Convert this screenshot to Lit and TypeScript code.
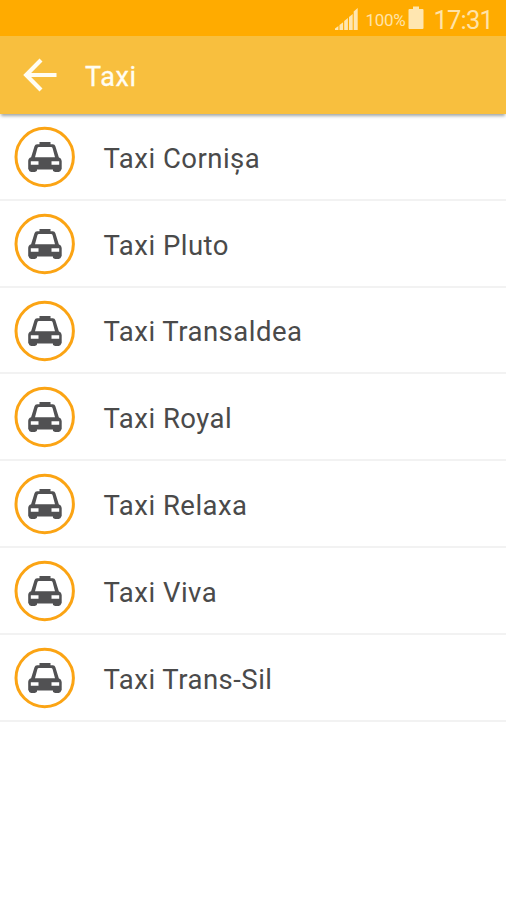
import { LitElement, html, css } from "lit";
import { customElement, property } from "lit/decorators.js";

@customElement("status-bar")
class StatusBar extends LitElement {
  static styles = css`
    :host {
      display: flex;
      height: 36px;
      box-sizing: border-box;
      padding-right: 13px;
      align-items: center;
      justify-content: flex-end;
      background: #ffab00;
      color: #ffe3a8;
    }
    svg { display: block; fill: #ffe6b0; }
    .signal { margin-right: 8px; }
    .percent { font-size: 17px; line-height: 36px; margin: 3px 3px 0 0; letter-spacing: -0.3px; }
    .clock { font-size: 25.5px; line-height: 36px; margin: 3px 0 0 9px; letter-spacing: -0.8px; }
  `;
  render() {
    return html`
      <svg class="signal" width="23" height="36" viewBox="0 0 23 36">
        <path d="M0 30v-1.500l3.400-2.500V30zM4.500 30v-5l3.600-2.800V30zM9.200 30v-9l3.700-3V30zM14 30V17l3.700-3V30zM18.700 30V11.500L22.700 8v22z" />
      </svg>
      <span class="percent">100%</span>
      <svg width="16" height="36" viewBox="0 0 16 36">
        <path d="M5 6.500h6V9h3.500q1 0 1 1v18q0 1-1 1h-13q-1 0-1-1V10q0-1 1-1H5z" />
      </svg>
      <span class="clock">17:31</span>
    `;
  }
}

@customElement("app-header")
class AppHeader extends LitElement {
  static styles = css`
    :host {
      display: flex;
      position: relative;
      height: 78px;
      align-items: center;
      background: #f8bf3e;
      color: #fffdf3;
      box-shadow: 0 3px 3px -1px rgba(70, 80, 80, 0.5);
    }
    svg { display: block; margin-left: 22px; }
    .title { font-size: 27px; line-height: 32px; margin: 3px 0 0 27px; letter-spacing: 0.6px; -webkit-text-stroke: 0.3px #fffdf3; }
  `;
  render() {
    return html`
      <svg width="36" height="36" viewBox="0 0 36 36" fill="none" stroke="#fffdf3" stroke-width="4.200">
        <path d="M34.500 18H4M19 3L4.200 18 19 33" />
      </svg>
      <span class="title">Taxi</span>
    `;
  }
}

@customElement("taxi-row")
class TaxiRow extends LitElement {
  @property() name = "";
  static styles = css`
    :host {
      display: flex;
      height: 86.8px;
      box-sizing: border-box;
      padding-top: 1.4px;
      border-bottom: 2px solid #f2f2f2;
      align-items: center;
      color: #4a4a4a;
    }
    svg { display: block; margin-left: 14px; }
    .name { font-size: 27.5px; line-height: 34px; margin: 3.4px 0 0 27.5px; letter-spacing: 0.48px; }
  `;
  render() {
    return html`
      <svg width="62" height="62" viewBox="0 0 62 62">
        <circle cx="30.700" cy="31" r="28.700" fill="#fff" stroke="#fba414" stroke-width="3" />
        <path
          fill="#515153"
          fill-rule="evenodd"
          d="M25.500 16h11v2.300h2.300q2 0 2.600 2l3.400 11q2.900 1 2.900 3.700V43q0 .8-.8.800v.4q0 1.800-4 1.800t-4-1.800v-.7H23v.7q0 1.800-4 1.800t-4-1.800v-.4q-.8 0-.8-.8V35q0-2.700 2.900-3.700l3.400-11q.6-2 2.600-2h2.400zM25 21q-1.300 0-1.600 1.200l-2.400 9h20l-2.400-9Q38.300 21 37 21zM16.800 35.300v3.400h7.700v-3.400zM37.500 35.300v3.400h7.700v-3.400z"
        />
      </svg>
      <span class="name">${this.name}</span>
    `;
  }
}

@customElement("app-root")
class AppRoot extends LitElement {
  static styles = css`
    :host {
      display: block;
      min-height: 900px;
      background: #fff;
      font-family: Roboto, "Noto Sans", sans-serif;
    }
  `;
  private companies = [
    "Taxi Cornișa",
    "Taxi Pluto",
    "Taxi Transaldea",
    "Taxi Royal",
    "Taxi Relaxa",
    "Taxi Viva",
    "Taxi Trans-Sil",
  ];
  render() {
    return html`
      <status-bar></status-bar>
      <app-header></app-header>
      <main>${this.companies.map((name) => html`<taxi-row .name=${name}></taxi-row>`)}</main>
    `;
  }
}
